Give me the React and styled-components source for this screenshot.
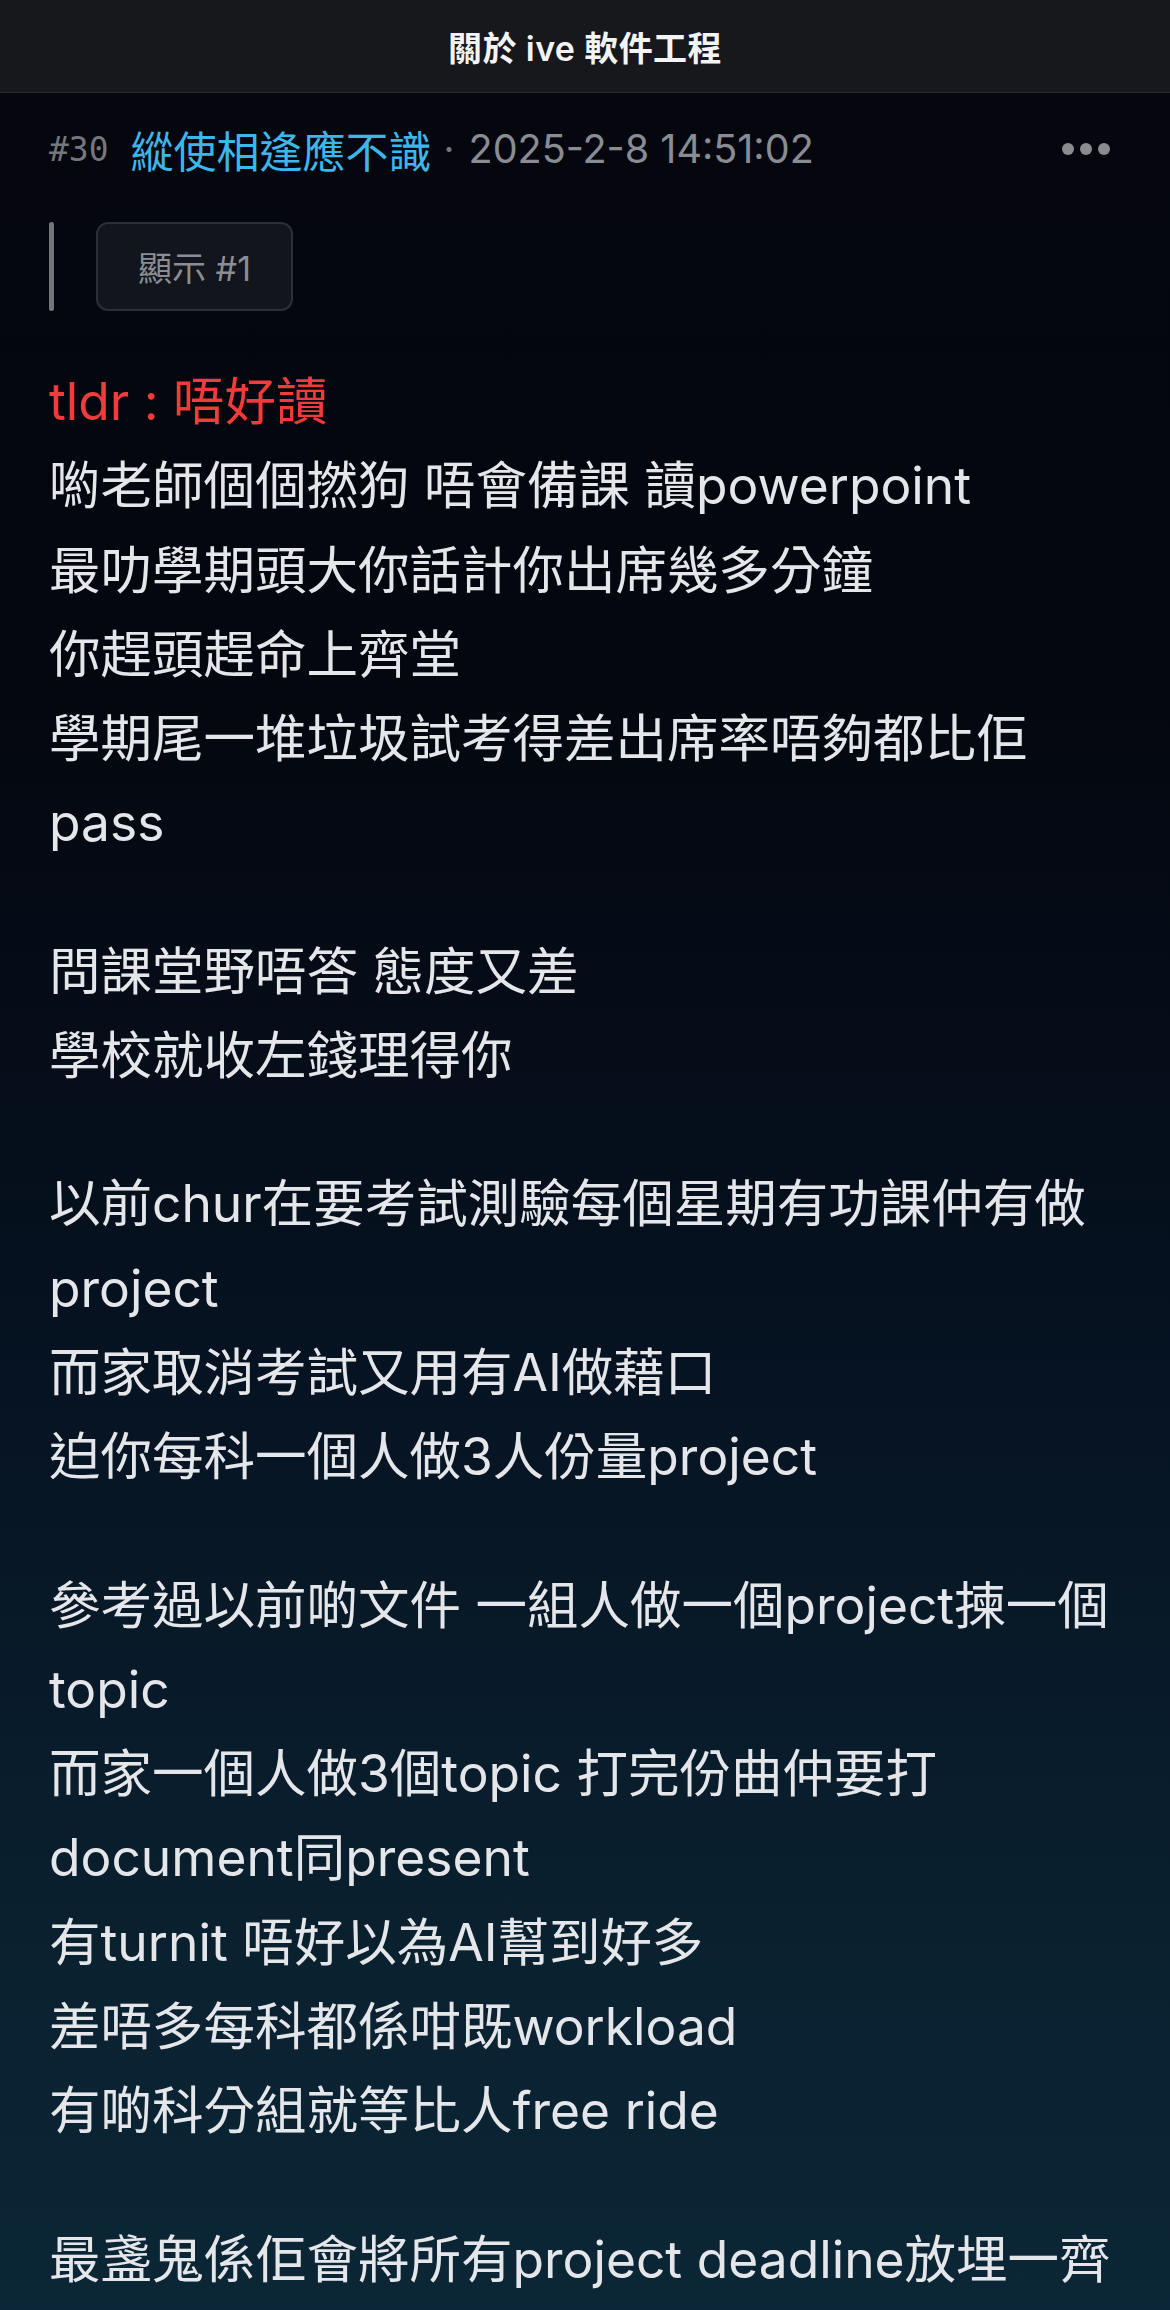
import React from 'react';
import styled, { createGlobalStyle } from 'styled-components';

const GlobalStyle = createGlobalStyle`
	html, body {
		margin: 0;
		padding: 0;
		background: #05060e;
	}
	body {
		font-family: Inter, "Noto Sans CJK TC", "Noto Sans", sans-serif;
		-webkit-font-smoothing: antialiased;
	}
`;

const Page = styled.div`
	width: 1170px;
	min-height: 2310px;
	background: linear-gradient(180deg, #05060e 0%, #04070f 30%, #061322 60%, #0a2130 85%, #0b2636 100%);
	overflow: hidden;
`;

const Header = styled.header`
	height: 92px;
	display: flex;
	align-items: center;
	justify-content: center;
	background: #16181c;
	border-bottom: 1px solid #26282c;
`;

const Title = styled.h1`
	margin: 0;
	font-size: 34px;
	font-weight: 600;
	color: #f4f4f6;
	letter-spacing: 0.4px;
`;

const Post = styled.article`
	padding: 0 24px 0 49px;
`;

const Meta = styled.div`
	height: 112px;
	display: flex;
	align-items: center;
`;

const Floor = styled.span`
	font-family: "DejaVu Sans Mono", "Liberation Mono", monospace;
	font-size: 33px;
	color: #74777d;
	margin-right: 22px;
`;

const Author = styled.span`
	font-size: 43px;
	color: #3db6ea;
`;

const Sep = styled.span`
	font-size: 38px;
	color: #74777d;
	margin: 0 14px 0 12px;
`;

const Time = styled.span`
	font-size: 39.5px;
	color: #8a8c93;
`;

const More = styled.button`
	margin-left: auto;
	margin-right: 36px;
	display: flex;
	gap: 6px;
	padding: 0;
	background: none;
	border: none;
	span {
		width: 12px;
		height: 12px;
		border-radius: 50%;
		background: #8b8c92;
	}
`;

const Quote = styled.div`
	margin-top: 17px;
	display: flex;
	align-items: stretch;
	height: 89px;
`;

const QuoteBar = styled.div`
	width: 5px;
	border-radius: 3px;
	background: #74767c;
	margin-right: 42px;
`;

const ShowButton = styled.button`
	width: 197px;
	height: 89px;
	box-sizing: border-box;
	background: #12151b;
	border: 2px solid #2c2f35;
	border-radius: 12px;
	color: #8b8e94;
	font-family: Inter, "Noto Sans CJK TC", sans-serif;
	font-size: 34px;
	padding: 0;
`;

const Body = styled.div`
	margin-top: 48px;
`;

const Para = styled.div`
	& + & {
		margin-top: 64px;
	}
`;

const Line = styled.div`
	font-size: 51.5px;
	line-height: 84.3px;
	white-space: nowrap;
	color: ${({ $red }) => ($red ? '#f23b3a' : '#e4e6ea')};
`;

const paragraphs = [
	[
		{ text: 'tldr : 唔好讀', red: true },
		{ text: '喲老師個個撚狗 唔會備課 讀powerpoint' },
		{ text: '最叻學期頭大你話計你出席幾多分鐘' },
		{ text: '你趕頭趕命上齊堂' },
		{ text: '學期尾一堆垃圾試考得差出席率唔夠都比佢' },
		{ text: 'pass' },
	],
	[
		{ text: '問課堂野唔答 態度又差' },
		{ text: '學校就收左錢理得你' },
	],
	[
		{ text: '以前chur在要考試測驗每個星期有功課仲有做' },
		{ text: 'project' },
		{ text: '而家取消考試又用有AI做藉口' },
		{ text: '迫你每科一個人做3人份量project' },
	],
	[
		{ text: '參考過以前啲文件 一組人做一個project揀一個' },
		{ text: 'topic' },
		{ text: '而家一個人做3個topic 打完份曲仲要打' },
		{ text: 'document同present' },
		{ text: '有turnit 唔好以為AI幫到好多' },
		{ text: '差唔多每科都係咁既workload' },
		{ text: '有啲科分組就等比人free ride' },
	],
	[
		{ text: '最盞鬼係佢會將所有project deadline放埋一齊' },
	],
];

export default function App() {
	return (
		<>
			<GlobalStyle />
			<Page>
				<Header>
					<Title>關於 ive 軟件工程</Title>
				</Header>
				<Post>
					<Meta>
						<Floor>#30</Floor>
						<Author>縱使相逢應不識</Author>
						<Sep>·</Sep>
						<Time>2025-2-8 14:51:02</Time>
						<More aria-label="more">
							<span />
							<span />
							<span />
						</More>
					</Meta>
					<Quote>
						<QuoteBar />
						<ShowButton>顯示 #1</ShowButton>
					</Quote>
					<Body>
						{paragraphs.map((lines, i) => (
							<Para key={i}>
								{lines.map((l, j) => (
									<Line key={j} $red={l.red}>{l.text}</Line>
								))}
							</Para>
						))}
					</Body>
				</Post>
			</Page>
		</>
	);
}
